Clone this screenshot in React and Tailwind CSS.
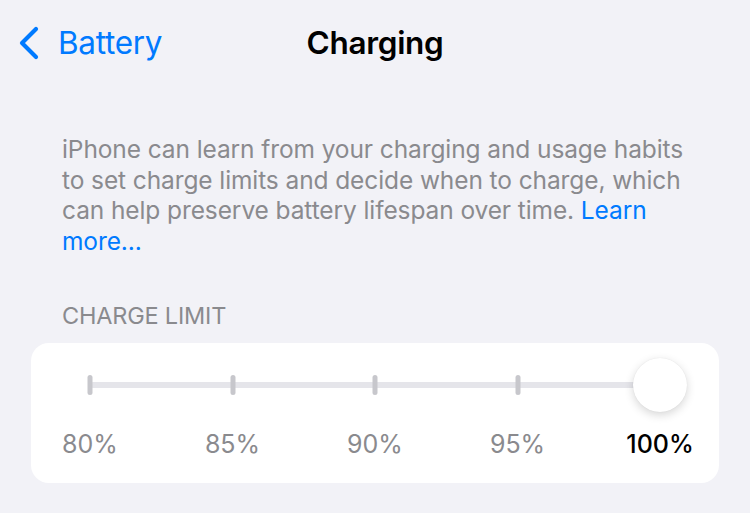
import React from 'react';

const stops = ['80%', '85%', '90%', '95%', '100%'];
const pos = ['left-[0%]', 'left-[25%]', 'left-[50%]', 'left-[75%]', 'left-[100%]'];

const ChargingScreen = () => {
    return (
        <div
            className="w-[750px] h-[513px] bg-[#f2f2f7] overflow-hidden"
            style={{ fontFamily: 'Inter, "Noto Sans", sans-serif' }}
        >
            {/* Nav bar */}
            <div className="relative h-[88px] flex items-center justify-center">
                <div className="absolute left-[16px] top-[26px] flex items-center text-[#007aff]">
                    <svg width="26" height="34" viewBox="0 0 26 34" fill="none">
                        <path d="M20 3 L6 17 L20 31" stroke="#007aff" strokeWidth="4.2" strokeLinecap="round" strokeLinejoin="round" />
                    </svg>
                    <span className="ml-[16px] text-[31.5px] leading-none tracking-[-0.3px]">Battery</span>
                </div>
                <h1 className="mt-[-2px] text-[31.5px] font-semibold text-black leading-none tracking-[-0.3px]">Charging</h1>
            </div>

            {/* Description */}
            <div className="pl-[62px] pt-[46px]">
                <p className="text-[24.5px] leading-[30.5px] text-[#8a8a8e] tracking-[-0.1px] whitespace-nowrap">
                    iPhone can learn from your charging and usage habits<br />
                    to set charge limits and decide when to charge, which<br />
                    can help preserve battery lifespan over time.{' '}
                    <span className="text-[#007aff]">Learn</span><br />
                    <span className="text-[#007aff]">more...</span>
                </p>
            </div>

            {/* Section header */}
            <div className="pl-[62px] pt-[48px] pb-[15px] text-[23.5px] leading-none text-[#8a8a8e] tracking-[-0.2px]">
                CHARGE LIMIT
            </div>

            {/* Card */}
            <div className="mx-[31px] h-[140px] bg-white rounded-[18px] px-[59px] pt-[15px]">
                <div className="relative h-[54px] flex items-center">
                    <div className="w-full h-[6px] bg-[#e5e5ea] rounded-full" />
                    {stops.slice(0, 4).map((s, i) => (
                        <div
                            key={s}
                            className={`absolute top-[17px] ${pos[i]} -translate-x-1/2 w-[5px] h-[20px] bg-[#c7c7cc] rounded-full`}
                        />
                    ))}
                    <div className="absolute top-0 left-[100%] -translate-x-1/2 w-[54px] h-[54px] rounded-full bg-white shadow-[0_3px_10px_rgba(0,0,0,0.16),0_0_1px_rgba(0,0,0,0.1)]" />
                </div>
                <div className="relative mt-[20px] h-[26px] text-[25px] leading-none">
                    {stops.map((s, i) => (
                        <span
                            key={s}
                            className={`absolute top-0 ${pos[i]} -translate-x-1/2 ${i === 4 ? 'text-black font-medium' : 'text-[#8a8a8e]'}`}
                        >
                            {s}
                        </span>
                    ))}
                </div>
            </div>
        </div>
    );
};

export default ChargingScreen;
